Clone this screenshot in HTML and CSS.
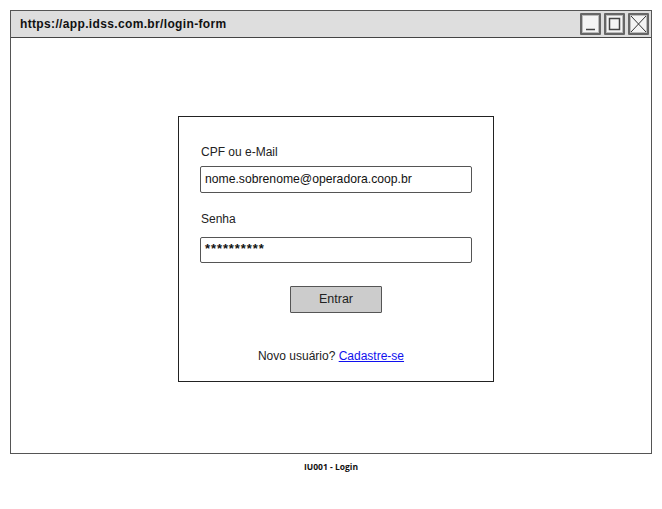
FILE: index.html
```html
<!DOCTYPE html>
<html lang="pt-BR">
<head>
<meta charset="utf-8">
<title>IU001 - Login</title>
<link rel="stylesheet" href="styles.css">
</head>
<body>
<div class="window">
  <div class="titlebar">
    <span class="url">https://app.idss.com.br/login-form</span>
    <div class="controls">
      <span class="ctl">
        <svg width="17" height="18" viewBox="0 0 17 18"><line x1="4" y1="14.5" x2="13" y2="14.5" stroke="#444" stroke-width="1.5"/></svg>
      </span>
      <span class="ctl">
        <svg width="17" height="18" viewBox="0 0 17 18"><rect x="3.5" y="3.5" width="10" height="11" fill="none" stroke="#444" stroke-width="1.5"/></svg>
      </span>
      <span class="ctl">
        <svg width="17" height="18" viewBox="0 0 17 18"><path d="M1 1 L16 17 M16 1 L1 17" stroke="#333" stroke-width="1" fill="none"/></svg>
      </span>
    </div>
  </div>
  <div class="content">
    <form class="card">
      <label class="label">CPF ou e-Mail</label>
      <div class="input first">nome.sobrenome@operadora.coop.br</div>
      <label class="label second">Senha</label>
      <div class="input pwd">**********</div>
      <div class="btn-row"><span class="btn">Entrar</span></div>
      <p class="signup">Novo usuário? <a href="#">Cadastre-se</a></p>
    </form>
  </div>
</div>
<div class="caption">IU001 - Login</div>
</body>
</html>
```
FILE: styles.css
```css
html, body {
  margin: 0;
  padding: 0;
  background: #fff;
}
body {
  font-family: "Liberation Sans", Arial, sans-serif;
  color: #222;
  width: 662px;
  height: 509px;
  overflow: hidden;
}
.window {
  margin: 10px 0 0 10px;
  width: 640px;
  height: 442px;
  border: 1px solid #555;
  display: flex;
  flex-direction: column;
}
.titlebar {
  height: 26px;
  background: #dedede;
  border-bottom: 1px solid #444;
  display: flex;
  align-items: center;
  justify-content: space-between;
  padding: 0 2px 0 9px;
}
.url {
  font-weight: bold;
  font-size: 12px;
  color: #111;
  letter-spacing: 0.35px;
}
.controls {
  display: flex;
  gap: 3px;
}
.ctl {
  width: 17px;
  height: 18px;
  border: 2px solid #666;
  outline: 1px solid #bbb;
  outline-offset: -3px;
  background: #f4f4f4;
  display: block;
  border-radius: 1px;
}
.ctl svg { display: block; }
.content {
  flex: 1;
  padding: 78px 0 0 167px;
}
.card {
  border: 1px solid #222;
  margin: 0;
  padding: 27px 0 0 0;
  box-sizing: border-box;
  height: 266px;
  width: 316px;
  display: flex;
  flex-direction: column;
}
.label {
  display: block;
  margin-left: 22px;
  font-size: 12px;
  line-height: 16px;
  color: #222;
}
.label.second { margin-top: 18px; }
.input {
  margin: 6px 0 0 21px;
  width: 272px;
  height: 27px;
  box-sizing: border-box;
  border: 1.5px solid #555;
  border-radius: 2px;
  padding: 0 0 0 4px;
  font-size: 12.2px;
  line-height: 24px;
  color: #111;
}
.input.pwd {
  margin-top: 10px;
  height: 26px;
  line-height: 22px;
  font-size: 13px;
  font-weight: bold;
  letter-spacing: 0.9px;
}
.btn-row {
  display: flex;
  justify-content: center;
  margin-top: 23px;
}
.btn {
  width: 92px;
  height: 27px;
  box-sizing: border-box;
  border: 1.5px solid #555;
  border-radius: 1px;
  background: #cccccc;
  font-size: 12.5px;
  line-height: 24px;
  text-align: center;
  color: #222;
}
.signup {
  margin: 35px 10px 0 0;
  text-align: center;
  font-size: 12px;
  line-height: 16px;
  color: #222;
}
.signup a {
  color: #1010ee;
  text-decoration: underline;
}
.caption {
  margin-top: 7px;
  text-align: center;
  font-family: "Open Sans", "Liberation Sans", sans-serif;
  font-weight: bold;
  font-size: 8.5px;
  color: #111;
}
```
